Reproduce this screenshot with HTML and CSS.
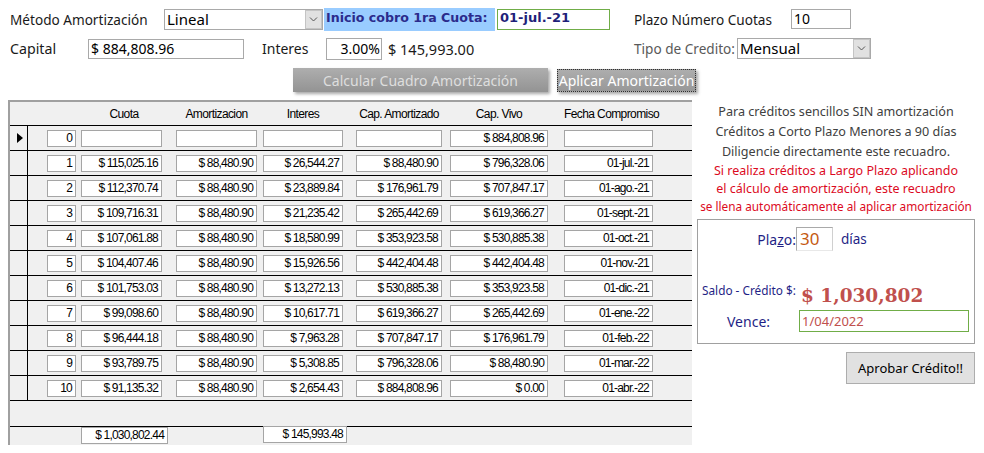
FILE: index.html
```html
<!DOCTYPE html>
<html lang="es">
<head>
    <meta charset="UTF-8">
    <title>Cuadro de Amortización</title>
    <link rel="stylesheet" href="styles.css">
</head>
<body>
    <!-- Datos del crédito -->
    <div class="form">
        <div class="form-row row-top">
            <span class="lbl lbl-metodo">Método Amortización</span>
            <div class="combo combo-metodo">
                <span class="combo-text">Lineal</span>
                <span class="drop"><svg width="9" height="5" viewBox="0 0 9 5"><path d="M1 0.5 L4.5 4 L8 0.5" fill="none" stroke="#555"/></svg></span>
            </div>
            <span class="lbl-inicio">Inicio cobro 1ra Cuota:</span>
            <div class="fld fld-fecha">01-jul.-21</div>
            <span class="lbl lbl-plazo">Plazo Número Cuotas</span>
            <div class="fld fld-cuotas">10</div>
        </div>
        <div class="form-row row-mid">
            <span class="lbl lbl-capital">Capital</span>
            <div class="fld fld-capital">$ 884,808.96</div>
            <span class="lbl lbl-interes">Interes</span>
            <div class="fld fld-interes">3.00%</div>
            <span class="lbl lbl-total">$ 145,993.00</span>
            <span class="lbl lbl-tipo">Tipo de Credito:</span>
            <div class="combo combo-tipo">
                <span class="combo-text">Mensual</span>
                <span class="drop"><svg width="9" height="5" viewBox="0 0 9 5"><path d="M1 0.5 L4.5 4 L8 0.5" fill="none" stroke="#555"/></svg></span>
            </div>
        </div>
        <div class="form-row row-btns">
            <button class="btn btn-calc" disabled>Calcular Cuadro Amortización</button>
            <button class="btn btn-aplicar">Aplicar Amortización</button>
        </div>
    </div>

    <div class="main">
        <!-- Cuadro de amortización -->
        <div class="grid">
            <div class="thead">
                <span class="sel-h"></span>
                <span class="c c-no"></span>
                <span class="c c-cuota">Cuota</span>
                <span class="c c-amort">Amortizacion</span>
                <span class="c c-int">Interes</span>
                <span class="c c-capam">Cap. Amortizado</span>
                <span class="c c-capviv">Cap. Vivo</span>
                <span class="c c-fecha">Fecha Compromiso</span>
            </div>

            <div class="trow">
                <span class="sel"><svg width="6" height="10" viewBox="0 0 6 10"><polygon points="0,0 6,5 0,10" fill="#000"/></svg></span>
                <span class="c c-no box">0</span>
                <span class="c c-cuota box"></span>
                <span class="c c-amort box"></span>
                <span class="c c-int box"></span>
                <span class="c c-capam box"></span>
                <span class="c c-capviv box">$ 884,808.96</span>
                <span class="c c-fecha box"></span>
            </div>
            <div class="trow">
                <span class="sel"></span>
                <span class="c c-no box">1</span>
                <span class="c c-cuota box">$ 115,025.16</span>
                <span class="c c-amort box">$ 88,480.90</span>
                <span class="c c-int box">$ 26,544.27</span>
                <span class="c c-capam box">$ 88,480.90</span>
                <span class="c c-capviv box">$ 796,328.06</span>
                <span class="c c-fecha box">01-jul.-21</span>
            </div>
            <div class="trow">
                <span class="sel"></span>
                <span class="c c-no box">2</span>
                <span class="c c-cuota box">$ 112,370.74</span>
                <span class="c c-amort box">$ 88,480.90</span>
                <span class="c c-int box">$ 23,889.84</span>
                <span class="c c-capam box">$ 176,961.79</span>
                <span class="c c-capviv box">$ 707,847.17</span>
                <span class="c c-fecha box">01-ago.-21</span>
            </div>
            <div class="trow">
                <span class="sel"></span>
                <span class="c c-no box">3</span>
                <span class="c c-cuota box">$ 109,716.31</span>
                <span class="c c-amort box">$ 88,480.90</span>
                <span class="c c-int box">$ 21,235.42</span>
                <span class="c c-capam box">$ 265,442.69</span>
                <span class="c c-capviv box">$ 619,366.27</span>
                <span class="c c-fecha box">01-sept.-21</span>
            </div>
            <div class="trow">
                <span class="sel"></span>
                <span class="c c-no box">4</span>
                <span class="c c-cuota box">$ 107,061.88</span>
                <span class="c c-amort box">$ 88,480.90</span>
                <span class="c c-int box">$ 18,580.99</span>
                <span class="c c-capam box">$ 353,923.58</span>
                <span class="c c-capviv box">$ 530,885.38</span>
                <span class="c c-fecha box">01-oct.-21</span>
            </div>
            <div class="trow">
                <span class="sel"></span>
                <span class="c c-no box">5</span>
                <span class="c c-cuota box">$ 104,407.46</span>
                <span class="c c-amort box">$ 88,480.90</span>
                <span class="c c-int box">$ 15,926.56</span>
                <span class="c c-capam box">$ 442,404.48</span>
                <span class="c c-capviv box">$ 442,404.48</span>
                <span class="c c-fecha box">01-nov.-21</span>
            </div>
            <div class="trow">
                <span class="sel"></span>
                <span class="c c-no box">6</span>
                <span class="c c-cuota box">$ 101,753.03</span>
                <span class="c c-amort box">$ 88,480.90</span>
                <span class="c c-int box">$ 13,272.13</span>
                <span class="c c-capam box">$ 530,885.38</span>
                <span class="c c-capviv box">$ 353,923.58</span>
                <span class="c c-fecha box">01-dic.-21</span>
            </div>
            <div class="trow">
                <span class="sel"></span>
                <span class="c c-no box">7</span>
                <span class="c c-cuota box">$ 99,098.60</span>
                <span class="c c-amort box">$ 88,480.90</span>
                <span class="c c-int box">$ 10,617.71</span>
                <span class="c c-capam box">$ 619,366.27</span>
                <span class="c c-capviv box">$ 265,442.69</span>
                <span class="c c-fecha box">01-ene.-22</span>
            </div>
            <div class="trow">
                <span class="sel"></span>
                <span class="c c-no box">8</span>
                <span class="c c-cuota box">$ 96,444.18</span>
                <span class="c c-amort box">$ 88,480.90</span>
                <span class="c c-int box">$ 7,963.28</span>
                <span class="c c-capam box">$ 707,847.17</span>
                <span class="c c-capviv box">$ 176,961.79</span>
                <span class="c c-fecha box">01-feb.-22</span>
            </div>
            <div class="trow">
                <span class="sel"></span>
                <span class="c c-no box">9</span>
                <span class="c c-cuota box">$ 93,789.75</span>
                <span class="c c-amort box">$ 88,480.90</span>
                <span class="c c-int box">$ 5,308.85</span>
                <span class="c c-capam box">$ 796,328.06</span>
                <span class="c c-capviv box">$ 88,480.90</span>
                <span class="c c-fecha box">01-mar.-22</span>
            </div>
            <div class="trow">
                <span class="sel"></span>
                <span class="c c-no box">10</span>
                <span class="c c-cuota box">$ 91,135.32</span>
                <span class="c c-amort box">$ 88,480.90</span>
                <span class="c c-int box">$ 2,654.43</span>
                <span class="c c-capam box">$ 884,808.96</span>
                <span class="c c-capviv box">$ 0.00</span>
                <span class="c c-fecha box">01-abr.-22</span>
            </div>

            <div class="tblank"></div>
            <div class="tfoot">
                <span class="sel-h"></span>
                <span class="c c-no"></span>
                <span class="c c-cuota box">$ 1,030,802.44</span>
                <span class="c c-amort"></span>
                <span class="c c-int c-int-total box">$ 145,993.48</span>
            </div>
        </div>

        <!-- Crédito sencillo -->
        <div class="side">
            <div class="note">
                <p>Para créditos sencillos SIN amortización</p>
                <p>Créditos a Corto Plazo Menores a 90 días</p>
                <p>Diligencie directamente este recuadro.</p>
                <p class="warn">Si realiza créditos a Largo Plazo aplicando</p>
                <p class="warn">el cálculo de amortización, este recuadro</p>
                <p class="warn small">se llena automáticamente al aplicar amortización</p>
            </div>
            <div class="credit">
                <div class="credit-row row-plazo">
                    <span class="clbl lbl-right">Pla<u>z</u>o:</span>
                    <div class="fld-dias">30</div>
                    <span class="clbl dias">días</span>
                </div>
                <div class="credit-row row-saldo">
                    <span class="clbl lbl-saldo">Saldo - Crédito $:</span>
                    <span class="saldo">$ 1,030,802</span>
                </div>
                <div class="credit-row row-vence">
                    <span class="clbl lbl-vence">Vence:</span>
                    <div class="fld-vence">1/04/2022</div>
                </div>
            </div>
            <div class="aprobar-wrap">
                <button class="btn-aprobar">Aprobar Crédito!!</button>
            </div>
        </div>
    </div>
</body>
</html>
```

FILE: styles.css
```css
* {
    margin: 0;
    padding: 0;
    box-sizing: border-box;
}

body {
    width: 984px;
    height: 453px;
    overflow: hidden;
    background: #fff;
    font-family: "Noto Sans", "Open Sans", sans-serif;
    font-size: 13.6px;
    color: #1a1a1a;
}

/* Form area */
.form-row {
    display: flex;
    align-items: center;
}

.row-top {
    margin-top: 8px;
    height: 22px;
    padding-left: 10px;
}

.row-mid {
    margin-top: 7px;
    height: 23px;
    padding-left: 10px;
}

.row-btns {
    margin-top: 8px;
    height: 24px;
    padding-left: 293px;
}

.lbl {
    white-space: nowrap;
}

.lbl-metodo { width: 154px; }
.lbl-plazo { width: 157px; margin-left: 24px; }
.lbl-capital { width: 78px; font-size: 14.2px; }
.lbl-interes { width: 64px; margin-left: 18px; font-size: 14px; }
.lbl-total { width: 246px; margin-left: 6px; font-size: 14.5px; }
.lbl-tipo { width: 103px; color: #595959; }

.combo {
    display: flex;
    align-items: stretch;
    height: 21px;
    border: 1px solid #a9a9a9;
    background: #fff;
}

.combo-text {
    flex: 1;
    padding-left: 2px;
    line-height: 19px;
    font-size: 15px;
    color: #000;
}

.drop {
    width: 17px;
    display: flex;
    align-items: center;
    justify-content: center;
    background: #e1e1e1;
    border: 1px solid #c4c4c4;
}

.combo-metodo { width: 159px; }
.combo-tipo { width: 134px; }

.lbl-inicio {
    width: 171px;
    height: 23px;
    margin-left: 1px;
    padding-left: 2px;
    background: #99ccff;
    font-family: "DejaVu Sans", sans-serif;
    font-weight: bold;
    font-size: 12.6px;
    line-height: 19px;
    color: #2b2b8c;
    white-space: nowrap;
}

.fld {
    height: 20px;
    border: 1px solid #a9a9a9;
    background: #fff;
    padding: 0 2px;
    line-height: 18px;
    color: #000;
    white-space: nowrap;
}

.fld-fecha {
    width: 113px;
    height: 21px;
    margin-left: 2px;
    border-color: #70ad47;
    font-family: "DejaVu Sans", sans-serif;
    font-weight: bold;
    font-size: 13px;
    line-height: 16px;
    color: #1f1f7a;
}

.fld-cuotas { width: 60px; font-size: 14px; }
.fld-capital { width: 156px; font-size: 14px; }

.fld-interes {
    width: 56px;
    height: 22px;
    text-align: right;
    font-size: 14px;
    line-height: 20px;
    padding-right: 1px;
}

.btn {
    height: 24px;
    border: none;
    font-family: "Noto Sans", "Open Sans", sans-serif;
    font-size: 14px;
    box-shadow: 2px 2px 3px rgba(0, 0, 0, 0.35);
}

.btn-calc {
    width: 255px;
    background: linear-gradient(#aeaeae, #939393);
    color: #dedede;
}

.btn-aplicar {
    width: 139px;
    height: 23px;
    margin-left: 9px;
    background: linear-gradient(#adadad, #989898);
    border: 1px dotted #303030;
    color: #fff;
}

/* Main area */
.main {
    display: flex;
    margin-top: 8px;
}

.grid {
    width: 684px;
    height: 345px;
    margin-left: 8px;
    border-left: 2px solid #a0a0a0;
    border-top: 2px solid #a0a0a0;
    background: #f0f0f0;
    font-family: "Liberation Sans", Arial, sans-serif;
    font-size: 12px;
    letter-spacing: -0.8px;
    color: #000;
}

.thead {
    display: flex;
    align-items: center;
    height: 24px;
    border-bottom: 1px solid #000;
    font-size: 12px;
    letter-spacing: -0.6px;
}

.trow {
    display: flex;
    align-items: center;
    height: 25px;
    border-bottom: 1px solid #000;
}

.sel, .sel-h {
    width: 18px;
    height: 100%;
    flex: none;
}

.sel {
    border-right: 1px solid #000;
    display: flex;
    align-items: center;
    padding-left: 7px;
}

.c {
    flex: none;
    white-space: nowrap;
    text-align: center;
}

.box {
    height: 17px;
    border: 1px solid #a5a5a5;
    background: #fff;
    text-align: right;
    padding-right: 3px;
    line-height: 15px;
}

.c-no { width: 29px; margin-left: 19px; }
.c-cuota { width: 81px; margin-left: 5px; }
.c-amort { width: 81px; margin-left: 14px; }
.c-int { width: 80px; margin-left: 6px; }
.c-capam { width: 86px; margin-left: 13px; }
.c-capviv { width: 98px; margin-left: 8px; }
.c-fecha { width: 89px; margin-left: 16px; }

.thead .c-cuota { padding-left: 5px; }

.tblank {
    height: 26px;
    border-bottom: 1px solid #000;
}

.tfoot {
    display: flex;
    align-items: flex-start;
    height: 18px;
}

.tfoot .c-cuota { width: 87px; }
.tfoot .c-amort { width: 75px; }
.tfoot .c-int-total { width: 84px; margin-top: -1px; }

/* Side panel */
.side {
    width: 278px;
    margin-left: 5px;
}

.note {
    padding-top: 2px;
    text-align: center;
    color: #404040;
    font-size: 12.6px;
}

.note p {
    line-height: 20px;
    white-space: nowrap;
}

.note .warn {
    color: #dc0a1e;
    font-size: 12.5px;
    line-height: 18px;
}

.note .warn:first-of-type {
    margin-top: 2px;
}

.note .small {
    font-size: 11.8px;
    line-height: 17px;
}

.credit {
    height: 125px;
    margin-top: 4px;
    border: 1px solid #a0a0a0;
    padding: 7px 5px 0 4px;
    color: #1f1f86;
}

.credit-row {
    display: flex;
    align-items: center;
}

.clbl {
    white-space: nowrap;
}

.lbl-right {
    width: 94px;
    text-align: right;
    font-size: 14px;
}

.fld-dias {
    width: 37px;
    height: 24px;
    border: 1px solid #a9a9a9;
    border-right-color: #d0d0d0;
    border-bottom-color: #e8e8e8;
    padding-left: 3px;
    font-size: 17px;
    line-height: 22px;
    color: #c55a11;
}

.dias {
    margin-left: 8px;
    font-size: 13.5px;
}

.row-saldo {
    margin-top: 29px;
    height: 24px;
}

.lbl-saldo {
    width: 99px;
    font-size: 11.8px;
    align-self: flex-start;
    padding-top: 2px;
}

.saldo {
    font-family: "DejaVu Serif", serif;
    font-weight: bold;
    font-size: 18.5px;
    color: #c0504d;
    padding-top: 6px;
}

.row-vence {
    margin-top: 6px;
}

.lbl-vence {
    width: 97px;
    padding-left: 25px;
    font-size: 14px;
}

.fld-vence {
    width: 170px;
    height: 22px;
    border: 1px solid #70ad47;
    padding-left: 2px;
    font-size: 13px;
    line-height: 20px;
    color: #c0504d;
}

.aprobar-wrap {
    display: flex;
    justify-content: flex-end;
    margin-top: 8px;
}

.btn-aprobar {
    width: 129px;
    height: 32px;
    background: #e1e1e1;
    border: 1px solid #adadad;
    font-family: "Noto Sans", "Open Sans", sans-serif;
    font-size: 13px;
    color: #000;
}
```
